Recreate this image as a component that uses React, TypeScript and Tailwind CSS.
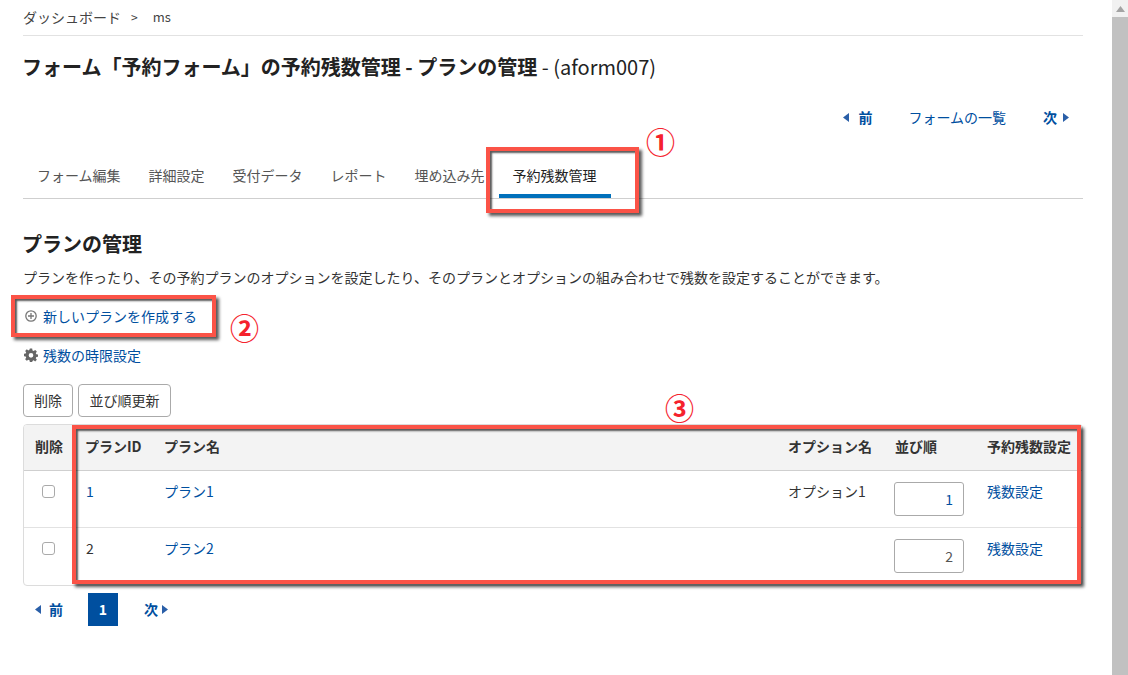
import React from "react";

const font = { fontFamily: '"Noto Sans CJK JP", "Liberation Sans", sans-serif' };

function Caret({ dir, color = "#2a5fa8" }: { dir: "l" | "r"; color?: string }) {
  return (
    <svg width="6" height="9" viewBox="0 0 6 9" className="inline-block">
      <path d={dir === "l" ? "M6 0 L0 4.5 L6 9 Z" : "M0 0 L6 4.5 L0 9 Z"} fill={color} />
    </svg>
  );
}

function Mark({ className }: { className: string }) {
  return <div className={`absolute border-4 border-[#fb5347] shadow-[3px_3px_3px_rgba(0,0,0,0.65),inset_2px_2px_2px_rgba(0,0,0,0.65)] ${className}`} />;
}

export default function App() {
  return (
    <div className="relative h-[675px] w-[1128px] overflow-hidden bg-white text-[14px] text-[#333]" style={font}>
      <div className="absolute right-0 top-0 flex h-[675px] w-[16px] flex-col bg-[#f1f1f1]">
        <div className="flex h-[17px] items-center justify-center">
          <svg width="9" height="6" viewBox="0 0 9 6"><path d="M4.5 0 L9 6 L0 6 Z" fill="#a3a3a3" /></svg>
        </div>
        <div className="flex-1 bg-[#c1c1c1]" />
      </div>

      <div className="ml-[23px] w-[1060px]">
        <div className="flex h-[36px] items-center gap-[10px] border-b border-[#e2e2e2] pb-[1px] text-[#444]">
          <span>ダッシュボード</span>
          <span className="text-[12px]">&gt;</span>
          <span className="ml-[5px] text-[13px]">ms</span>
        </div>

        <h1 className="-ml-[1px] mt-[17px] h-[28px] text-[20px] font-bold leading-[28px] text-[#222]">
          フォーム「予約フォーム」の予約残数管理 - プランの管理 <span className="font-normal">- (aform007)</span>
        </h1>

        <div className="mt-[24px] flex h-[24px] items-center justify-end pr-[14px] text-[14px] text-[#004f9f]">
          <a className="flex items-center gap-[9px] font-bold"><Caret dir="l" />前</a>
          <a className="ml-[36px]">フォームの一覧</a>
          <a className="ml-[37px] flex items-center gap-[6px] font-bold">次<Caret dir="r" /></a>
        </div>

        <div className="mt-[24px] flex h-[46px] border-b border-[#cfcfcf] pl-[14px] text-[#555]">
          <a className="mr-[28px] pt-[12px]">フォーム編集</a>
          <a className="mr-[28px] pt-[12px]">詳細設定</a>
          <a className="mr-[28px] pt-[12px]">受付データ</a>
          <a className="mr-[28px] pt-[12px]">レポート</a>
          <a className="mr-[14px] pt-[12px]">埋め込み先</a>
          <a className="h-[45px] w-[112px] border-b-4 border-[#0070bb] pl-[14px] pt-[12px] text-[#222]">予約残数管理</a>
        </div>

        <h2 className="-ml-[1px] mt-[29px] h-[32px] text-[20px] font-bold leading-[32px] text-[#222]">プランの管理</h2>
        <p className="mt-[5px] h-[24px] leading-[24px] text-[#333]">
          プランを作ったり、その予約プランのオプションを設定したり、そのプランとオプションの組み合わせで残数を設定することができます。
        </p>

        <div className="mt-[15px] flex h-[24px] items-center gap-[6px] pl-[2px] text-[#004f9f]">
          <svg width="12" height="12" viewBox="0 0 12 12" fill="none" stroke="#777" strokeWidth="1.3">
            <circle cx="6" cy="6" r="5.2" />
            <path d="M3 6 H9 M6 3 V9" />
          </svg>
          <a>新しいプランを作成する</a>
        </div>

        <div className="mt-[15px] flex h-[24px] items-center gap-[5px] pl-[1px] text-[#004f9f]">
          <svg width="14" height="14" viewBox="0 0 24 24" fill="#666">
            <path fillRule="evenodd" d="M10 1h4l.6 3.2c.7.2 1.3.5 1.9.9L19.2 3.300l2.800 2.800-1.800 2.700c.4.6.7 1.200.9 1.900L24 11v4l-2.900.6c-.2.600-.5 1.200-.9 1.800l1.800 2.800-2.800 2.800-2.700-1.800c-.6.400-1.200.700-1.900.900L14 24h-4l-.6-3c-.7-.2-1.300-.5-1.900-.900l-2.700 1.800L2 19.100l1.800-2.700c-.4-.6-.7-1.200-.9-1.800L0 14v-4l2.900-.6c.2-.7.5-1.300.9-1.900L2 5.100 4.800 2.300l2.700 1.800c.6-.4 1.200-.7 1.900-.9L10 1zm2 7.500a4 4 0 1 0 0 8 4 4 0 0 0 0-8z" />
          </svg>
          <a>残数の時限設定</a>
        </div>

        <div className="mt-[17px] flex gap-[5px]">
          <button className="h-[33px] w-[50px] rounded-[4px] border border-[#aaa] bg-white text-[#333]">削除</button>
          <button className="h-[33px] w-[93px] rounded-[4px] border border-[#aaa] bg-white text-[#333]">並び順更新</button>
        </div>

        <div className="mt-[7px] overflow-hidden rounded-[4px] border border-[#dcdcdc]">
          <table className="w-full table-fixed border-collapse">
            <colgroup>
              <col className="w-[50px]" />
              <col className="w-[90px]" />
              <col className="w-[624px]" />
              <col className="w-[107px]" />
              <col className="w-[92px]" />
              <col />
            </colgroup>
            <thead>
              <tr className="h-[45px] border-b border-[#cfcfcf] bg-[#f3f3f3] text-left font-bold text-[#333]">
                <th className="pb-[2px] text-center">削除</th>
                <th className="pb-[2px] pl-[11px]">プランID</th>
                <th className="pb-[2px]">プラン名</th>
                <th className="pb-[2px]">オプション名</th>
                <th className="pb-[2px]">並び順</th>
                <th className="whitespace-nowrap pb-[2px]">予約残数設定</th>
              </tr>
            </thead>
            <tbody>
              <tr className="h-[57px] border-b border-[#e2e2e2] align-top">
                <td className="pt-[11px] text-center"><input type="checkbox" className="-ml-[1px] h-[13px] w-[13px] appearance-none rounded-[3px] border border-[#aaa] bg-white" /></td>
                <td className="pl-[12px] pt-[10px] text-[#004f9f]">1</td>
                <td className="pt-[10px] text-[#004f9f]">プラン1</td>
                <td className="pt-[10px]">オプション1</td>
                <td className="pt-[11px]"><div className="-ml-[1px] flex h-[34px] w-[70px] items-center justify-end rounded-[3px] border border-[#aaa] pr-[10px] pt-[1px] text-[#004f9f]">1</div></td>
                <td className="pt-[10px] text-[#004f9f]">残数設定</td>
              </tr>
              <tr className="h-[58px] align-top">
                <td className="pt-[11px] text-center"><input type="checkbox" className="-ml-[1px] h-[13px] w-[13px] appearance-none rounded-[3px] border border-[#aaa] bg-white" /></td>
                <td className="pl-[12px] pt-[10px]">2</td>
                <td className="pt-[10px] text-[#004f9f]">プラン2</td>
                <td className="pt-[10px]"></td>
                <td className="pt-[11px]"><div className="-ml-[1px] flex h-[34px] w-[70px] items-center justify-end rounded-[3px] border border-[#aaa] pr-[10px] pt-[1px] text-[#555]">2</div></td>
                <td className="pt-[10px] text-[#004f9f]">残数設定</td>
              </tr>
            </tbody>
          </table>
        </div>

        <div className="mt-[7px] flex h-[33px] items-center text-[#004f9f]">
          <a className="ml-[12px] flex items-center gap-[8px] font-bold"><Caret dir="l" />前</a>
          <span className="ml-[25px] flex h-[33px] w-[30px] items-center justify-center bg-[#004f9f] font-bold text-white">1</span>
          <a className="ml-[26px] flex items-center gap-[4px] font-bold">次<Caret dir="r" /></a>
        </div>
      </div>

      <Mark className="left-[486px] top-[147px] h-[66px] w-[153px]" />
      <Mark className="left-[11px] top-[295px] h-[42px] w-[205px]" />
      <Mark className="left-[72px] top-[425px] h-[159px] w-[1009px]" />

      <span className="absolute left-[646px] top-[122px] text-[29px] font-bold leading-[38px] text-[#f5222d]">①</span>
      <span className="absolute left-[230px] top-[308px] text-[29px] font-bold leading-[38px] text-[#f5222d]">②</span>
      <span className="absolute left-[665px] top-[388px] text-[29px] font-bold leading-[38px] text-[#f5222d]">③</span>
    </div>
  );
}
